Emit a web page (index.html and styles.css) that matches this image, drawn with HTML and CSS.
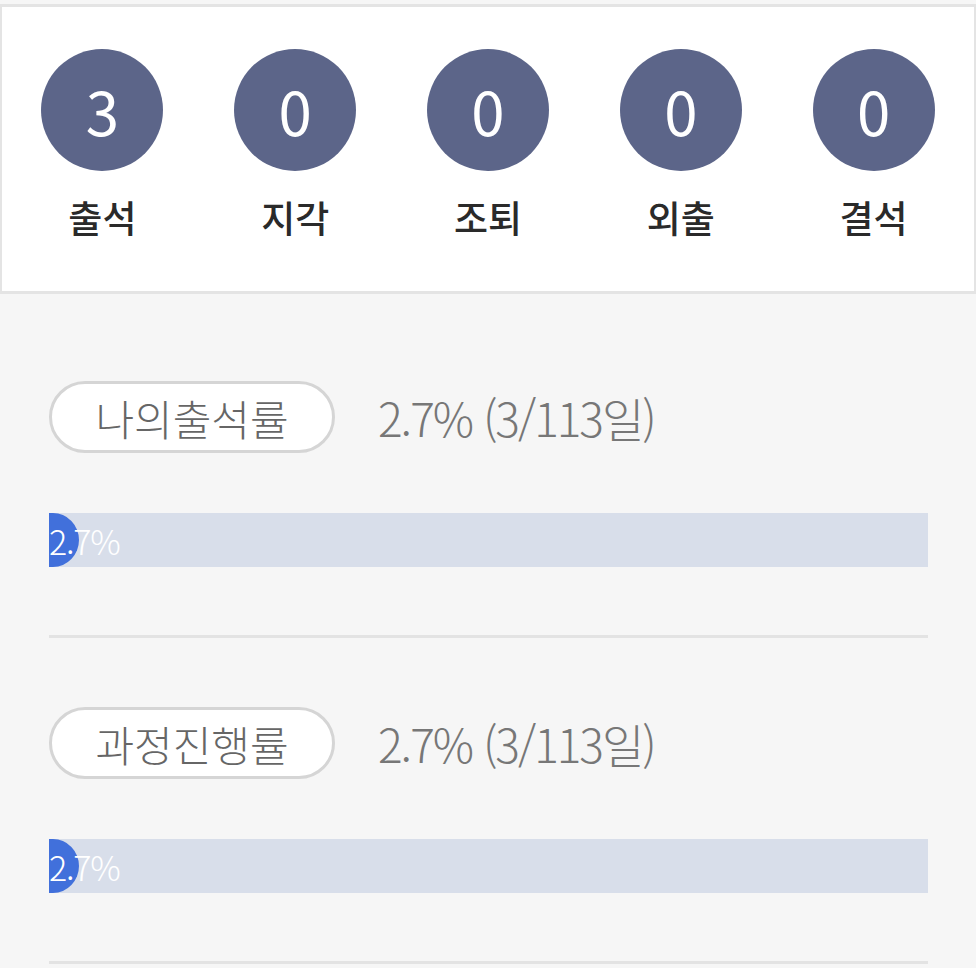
FILE: index.html
```html
<!DOCTYPE html>
<html lang="ko">
<head>
<meta charset="utf-8">
<link rel="stylesheet" href="styles.css">
</head>
<body>
<div class="summary">
  <div class="stat"><div class="circle">3</div><div class="stat-label">출석</div></div>
  <div class="stat"><div class="circle">0</div><div class="stat-label">지각</div></div>
  <div class="stat"><div class="circle">0</div><div class="stat-label">조퇴</div></div>
  <div class="stat"><div class="circle">0</div><div class="stat-label">외출</div></div>
  <div class="stat"><div class="circle">0</div><div class="stat-label">결석</div></div>
</div>
<div class="rates">
  <section class="rate">
    <div class="rate-head">
      <span class="pill">나의출석률</span>
      <span class="rate-value">2.7% (3/113일)</span>
    </div>
    <div class="bar">
      <div class="bar-fill" style="width:30px"></div>
      <span class="bar-text">2.7%</span>
    </div>
  </section>
  <section class="rate">
    <div class="rate-head">
      <span class="pill">과정진행률</span>
      <span class="rate-value">2.7% (3/113일)</span>
    </div>
    <div class="bar">
      <div class="bar-fill" style="width:30px"></div>
      <span class="bar-text">2.7%</span>
    </div>
  </section>
</div>
</body>
</html>
```
FILE: styles.css
```css
* { box-sizing: border-box; }
html, body { margin: 0; padding: 0; }
body {
  background: #f6f6f6;
  font-family: "Noto Sans CJK KR", "Noto Sans", sans-serif;
  padding-top: 4px;
}
.summary {
  background: #fff;
  border: 2px solid #e4e4e4;
  border-top-width: 3px;
  border-bottom-width: 3px;
  display: grid;
  grid-template-columns: repeat(5, 1fr);
  padding: 42px 4px 0 4px;
  height: 290px;
}
.stat {
  display: flex;
  flex-direction: column;
  align-items: center;
}
.circle {
  width: 122px;
  height: 122px;
  border-radius: 50%;
  background: #5c6589;
  color: #fff;
  font-size: 60px;
  font-weight: 400;
  display: flex;
  align-items: center;
  justify-content: center;
  line-height: 1;
}
.stat-label {
  margin-top: 20px;
  font-size: 37px;
  line-height: 52px;
  font-weight: 500;
  color: #2a2a2a;
}
.rates {
  padding: 18px 48px 0 49px;
}
.rate {
  padding-top: 69px;
  padding-bottom: 68px;
  border-bottom: 3px solid #e3e3e3;
}
.rate-head {
  display: flex;
  align-items: center;
  gap: 43px;
}
.pill {
  width: 286px;
  height: 72px;
  border: 3px solid #d5d5d5;
  border-radius: 36px;
  background: #fff;
  display: flex;
  align-items: center;
  justify-content: center;
  font-size: 42px;
  font-weight: 300;
  color: #666;
  letter-spacing: 0;
}
.rate-value {
  font-size: 46px;
  font-weight: 300;
  color: #777;
  letter-spacing: -2px;
}
.bar {
  position: relative;
  margin-top: 60px;
  height: 54px;
  background: #d8deea;
  display: flex;
  align-items: center;
}
.bar-fill {
  position: absolute;
  left: 0;
  top: 0;
  bottom: 0;
  background: #4170db;
  border-radius: 0 26px 26px 0 / 0 27px 27px 0;
}
.bar-text {
  position: relative;
  color: #fff;
  font-size: 34px;
  font-weight: 300;
  letter-spacing: -1.2px;
}
```
